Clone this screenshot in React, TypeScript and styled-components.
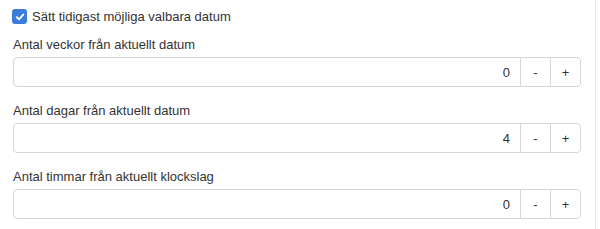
import React, { useState } from "react";
import styled, { createGlobalStyle } from "styled-components";

const Global = createGlobalStyle`
  html, body { margin: 0; padding: 0; background: #fff; }
  body { font-family: "Liberation Sans", Arial, sans-serif; color: #333; }
`;

const Panel = styled.div`
  width: 596px;
  height: 229px;
  box-sizing: border-box;
  border-right: 1px solid #e6e6e6;
  padding: 8px 14px 0 13px;
  display: flex;
  flex-direction: column;
`;

const CheckRow = styled.label`
  display: flex;
  align-items: center;
  gap: 5px;
  height: 17px;
  font-size: 13px;
  color: #333;
`;

const Box = styled.span`
  width: 15px;
  height: 15px;
  border-radius: 3px;
  background: #3a7ddb;
  display: flex;
  align-items: center;
  justify-content: center;
  margin-left: -1px;
`;

const Field = styled.div`
  display: flex;
  flex-direction: column;
  margin-top: 12px;
  & + & { margin-top: 16px; }
`;

const Label = styled.div`
  font-size: 13px;
  line-height: 15px;
  color: #333;
  margin-bottom: 5px;
`;

const Group = styled.div`
  display: flex;
  height: 30px;
  border: 1px solid #d6d6d6;
  border-radius: 4px;
  box-sizing: border-box;
`;

const Value = styled.div`
  flex: 1;
  display: flex;
  align-items: center;
  justify-content: flex-end;
  padding-right: 10px;
  font-size: 13px;
  color: #333;
`;

const Btn = styled.div<{ $w: number }>`
  width: ${(p) => p.$w}px;
  border-left: 1px solid #d6d6d6;
  display: flex;
  align-items: center;
  justify-content: center;
  font-size: 13px;
  color: #333;
`;

const rows = [
  { label: "Antal veckor från aktuellt datum", value: "0" },
  { label: "Antal dagar från aktuellt datum", value: "4" },
  { label: "Antal timmar från aktuellt klockslag", value: "0" },
];

export default function App() {
  const [vals] = useState(rows);
  return (
    <>
      <Global />
      <Panel>
        <CheckRow>
          <Box>
            <svg width="10" height="10" viewBox="0 0 10 10">
              <path d="M1.8 5.2 L4 7.3 L8.3 2.6" stroke="#fff" strokeWidth="1.9" fill="none" strokeLinecap="round" strokeLinejoin="round" />
            </svg>
          </Box>
          Sätt tidigast möjliga valbara datum
        </CheckRow>
        {vals.map((r) => (
          <Field key={r.label}>
            <Label>{r.label}</Label>
            <Group>
              <Value>{r.value}</Value>
              <Btn $w={29}>-</Btn>
              <Btn $w={29}>+</Btn>
            </Group>
          </Field>
        ))}
      </Panel>
    </>
  );
}
